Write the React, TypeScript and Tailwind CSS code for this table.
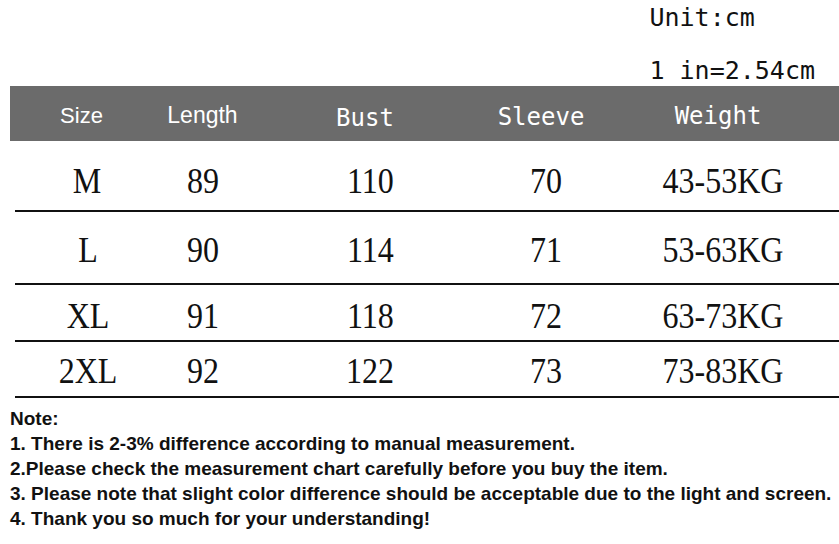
const cols = 'grid grid-cols-[145px_85px_250px_102px_252px]';

const rows = [
  { size: 'M', length: '89', bust: '110', sleeve: '70', weight: '43-53KG', h: 'h-[71px]', pt: 'pt-[10px]' },
  { size: 'L', length: '90', bust: '114', sleeve: '71', weight: '53-63KG', h: 'h-[73px]', pt: 'pt-[4px]' },
  { size: 'XL', length: '91', bust: '118', sleeve: '72', weight: '63-73KG', h: 'h-[57px]', pt: 'pt-[6px]' },
  { size: '2XL', length: '92', bust: '122', sleeve: '73', weight: '73-83KG', h: 'h-[56px]', pt: 'pt-[4px]' },
];

const notes = [
  'Note:',
  '1. There is 2-3% difference according to manual measurement.',
  '2.Please check the measurement chart carefully before you buy the item.',
  '3. Please note that slight color difference should be acceptable due to the light and screen.',
  '4. Thank you so much for your understanding!',
];

function Cell({ children }: { children: string }) {
  return (
    <div className="flex items-center justify-center">
      <span className="inline-block scale-x-[0.89]">{children}</span>
    </div>
  );
}

export default function App() {
  return (
    <div className="w-[839px] h-[544px] bg-white overflow-hidden text-[#111]">
      {/* unit info */}
      <div className="h-[86px] flex justify-end pr-[24px]">
        <div className="flex flex-col items-start font-['DejaVu_Sans_Mono',monospace] text-[25px] leading-[36px]">
          <div>Unit:cm</div>
          <div className="mt-[17px]">1 in=2.54cm</div>
        </div>
      </div>

      {/* header */}
      <div className={`${cols} ml-[10px] h-[55px] bg-[#6b6b6b] text-white pt-[4px]`}>
        <div className="flex items-center justify-center pr-[2px] font-['Liberation_Sans',sans-serif] text-[22px]">Size</div>
        <div className="flex items-center justify-center pl-[10px] font-['Liberation_Sans',sans-serif] text-[23px]">Length</div>
        <div className="flex items-center justify-center pt-[4px] font-['DejaVu_Sans_Mono',monospace] text-[24px]">Bust</div>
        <div className="flex items-center justify-center pt-[2px] font-['DejaVu_Sans_Mono',monospace] text-[24px]">Sleeve</div>
        <div className="flex items-center justify-center font-['DejaVu_Sans_Mono',monospace] text-[24px]">Weight</div>
      </div>

      {/* rows */}
      <div className="ml-[15px] font-['Liberation_Serif',serif] text-[36px] leading-none">
        {rows.map((r) => (
          <div key={r.size} className={`${cols} ${r.h} ${r.pt} border-b-2 border-[#111]`}>
            <Cell>{r.size}</Cell>
            <Cell>{r.length}</Cell>
            <Cell>{r.bust}</Cell>
            <Cell>{r.sleeve}</Cell>
            <Cell>{r.weight}</Cell>
          </div>
        ))}
      </div>

      {/* notes */}
      <div className="pl-[10px] pt-[8px] font-['Liberation_Sans_Narrow','Liberation_Sans',sans-serif] font-bold text-[19px] leading-[25px] text-[#111]">
        {notes.map((n) => (
          <div key={n}>{n}</div>
        ))}
      </div>
    </div>
  );
}
